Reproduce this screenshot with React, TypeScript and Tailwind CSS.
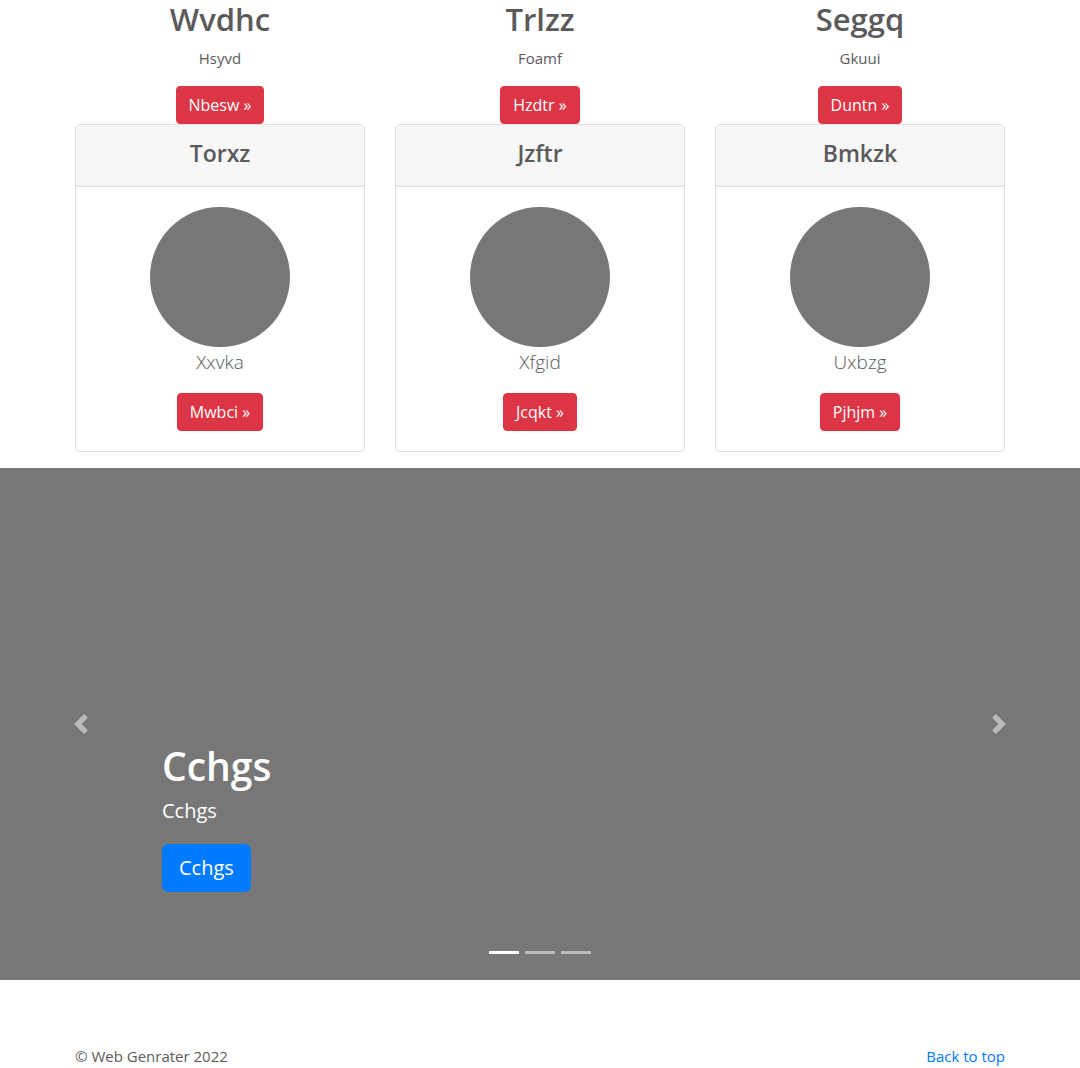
const features = [
  { name: "Wvdhc", text: "Hsyvd", action: "Nbesw »" },
  { name: "Trlzz", text: "Foamf", action: "Hzdtr »" },
  { name: "Seggq", text: "Gkuui", action: "Duntn »" },
];

const cards = [
  { name: "Torxz", text: "Xxvka", action: "Mwbci »" },
  { name: "Jzftr", text: "Xfgid", action: "Jcqkt »" },
  { name: "Bmkzk", text: "Uxbzg", action: "Pjhjm »" },
];

function RedButton({ label }: { label: string }) {
  return (
    <button type="button" className="rounded border border-[#dc3545] bg-[#dc3545] px-3 py-1.5 text-base leading-6 text-white">
      {label}
    </button>
  );
}

function Arrow({ next }: { next?: boolean }) {
  return (
    <svg viewBox="0 0 8 8" fill="#fff" className="size-5" aria-hidden="true">
      {next ? (
        <path d="M2.75 0l-1.5 1.5L3.75 4l-2.5 2.5L2.75 8l4-4-4-4z" />
      ) : (
        <path d="M5.25 0l-4 4 4 4 1.5-1.5L4.25 4l2.5-2.5L5.25 0z" />
      )}
    </svg>
  );
}

export default function App() {
  return (
    <div className="min-h-screen bg-white font-['Segoe_UI','Open_Sans',sans-serif] text-[15px] leading-6 text-[#5a5a5a]">
      <main>
        <div className="mx-auto max-w-[960px] px-[15px]">
          <div className="grid grid-cols-3 gap-[30px] text-center">
            {features.map((f) => (
              <section key={f.name} className="flex flex-col items-center">
                <h2 className="mb-2 text-[31px] leading-[38px] font-semibold">{f.name}</h2>
                <p className="mb-4">{f.text}</p>
                <RedButton label={f.action} />
              </section>
            ))}
          </div>
          <div className="mb-4 grid grid-cols-3 gap-[30px] text-center">
            {cards.map((c) => (
              <article key={c.name} className="rounded border border-[#dfdfdf]">
                <header className="border-b border-[#dfdfdf] bg-[#f7f7f7] px-5 pt-3 pb-[17px]">
                  <h4 className="text-[23px] leading-8 font-semibold">{c.name}</h4>
                </header>
                <div className="flex flex-col items-center p-5">
                  <div className="size-[140px] rounded-full bg-[#777]" />
                  <p className="mb-4 text-[19px] leading-[30px] font-light">{c.text}</p>
                  <RedButton label={c.action} />
                </div>
              </article>
            ))}
          </div>
        </div>

        <section aria-label="Highlights" className="relative h-[512px] bg-[#777]">
          <div className="flex h-full items-stretch justify-between">
            <button type="button" aria-label="Previous" className="flex w-[15%] items-center justify-center opacity-50">
              <Arrow />
            </button>
            <button type="button" aria-label="Next" className="flex w-[15%] items-center justify-center opacity-50">
              <Arrow next />
            </button>
          </div>
          <div className="absolute inset-x-[15%] bottom-[88px] text-white">
            <h1 className="mb-1.5 text-[39px] leading-[48px] font-semibold">Cchgs</h1>
            <p className="mb-[18px] text-xl leading-[30px]">Cchgs</p>
            <a href="#" className="inline-block rounded-md border border-[#007bff] bg-[#007bff] px-4 py-2 text-xl leading-[30px]">
              Cchgs
            </a>
          </div>
          <div className="absolute inset-x-0 bottom-[26px] flex justify-center gap-1.5">
            <button type="button" aria-label="Slide 1" className="h-[3px] w-[30px] bg-white" />
            <button type="button" aria-label="Slide 2" className="h-[3px] w-[30px] bg-white/50" />
            <button type="button" aria-label="Slide 3" className="h-[3px] w-[30px] bg-white/50" />
          </div>
        </section>
      </main>

      <footer className="mx-auto flex max-w-[960px] justify-between px-[15px] pt-16">
        <p>© Web Genrater 2022</p>
        <a href="#" className="text-[#007bff]">Back to top</a>
      </footer>
    </div>
  );
}
